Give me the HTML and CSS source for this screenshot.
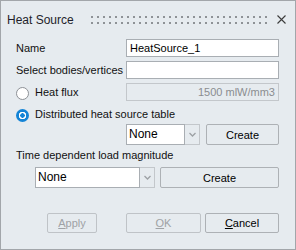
FILE: index.html
```html
<!doctype html>
<html>
	<head>
		<title>Heat Source</title>
		<link rel="stylesheet" href="styles.css">
	</head>
	<body>
		<div class="dialog">
			<div class="titlebar">
				<span class="title">Heat Source</span>
				<div class="grip">
					<div class="gripRow"></div>
					<div class="gripRow"></div>
				</div>
				<svg class="close" width="9" height="9" viewBox="0 0 9 9">
					<path d="M0.5 0.5 L8.5 8.5 M8.5 0.5 L0.5 8.5" stroke="#3c3c3c" stroke-width="1.1" fill="none"/>
				</svg>
			</div>
			<div class="form">
				<div class="field">
					<label>Name</label>
					<div class="input">HeatSource_1</div>
				</div>
				<div class="field">
					<label>Select bodies/vertices</label>
					<div class="input"></div>
				</div>
				<div class="field">
					<label class="option"><input type="radio" name="src"> Heat flux</label>
					<div class="input disabled">1500 mlW/mm3</div>
				</div>
				<div class="optionRow">
					<label class="option"><input type="radio" name="src" checked> Distributed heat source table</label>
				</div>
				<div class="tableRow">
					<div class="combo short">
						<div class="comboText">None</div>
						<div class="comboArrow">
							<svg width="7" height="5" viewBox="0 0 7 5"><path d="M0.5 1 L3.5 4 L6.5 1" stroke="#9da1a5" stroke-width="1.3" fill="none"/></svg>
						</div>
					</div>
					<button class="btn create">Create</button>
				</div>
				<div class="labelRow">Time dependent load magnitude</div>
				<div class="loadRow">
					<div class="combo long">
						<div class="comboText">None</div>
						<div class="comboArrow">
							<svg width="7" height="5" viewBox="0 0 7 5"><path d="M0.5 1 L3.5 4 L6.5 1" stroke="#9da1a5" stroke-width="1.3" fill="none"/></svg>
						</div>
					</div>
					<button class="btn createWide">Create</button>
				</div>
			</div>
			<div class="actions">
				<button class="btn off apply"><u>A</u>pply</button>
				<button class="btn off ok"><u>O</u>K</button>
				<button class="btn cancel"><u>C</u>ancel</button>
			</div>
		</div>
	</body>
</html>
```
FILE: styles.css
```css
* {
	margin: 0px;
	padding: 0px;
}
body {
	font-family: "Liberation Sans", Arial, sans-serif;
	font-size: 11px;
	color: #111;
}
.dialog {
	width: 296px;
	height: 250px;
	box-sizing: border-box;
	border: 1px solid #a2a6aa;
	background: #e6ebef;
	display: flex;
	flex-direction: column;
}
.titlebar {
	height: 38px;
	display: flex;
	align-items: center;
	padding-left: 6px;
}
.title {
	font-size: 12px;
	width: 84px;
	color: #1e1e2a;
}
.grip {
	width: 176px;
	display: flex;
	flex-direction: column;
	gap: 4px;
	margin-top: -1px;
}
.gripRow {
	height: 2px;
	background: repeating-linear-gradient(90deg, #8e9296 0 2px, transparent 2px 6px);
}
.close {
	margin-left: 10px;
	margin-top: -1px;
}
.form {
	padding: 0 16px 0 15px;
	display: flex;
	flex-direction: column;
}
.field {
	display: grid;
	grid-template-columns: 110px 153px;
	align-items: center;
	height: 18px;
	margin-bottom: 4px;
}
.input {
	height: 18px;
	box-sizing: border-box;
	border: 1px solid #a9aeb3;
	background: white;
	line-height: 16px;
	padding: 0 3px;
	color: #000;
}
.input.disabled {
	background: #e6ebef;
	border-color: #c3c7cb;
	color: #8a8d90;
	text-align: right;
}
.option {
	display: flex;
	align-items: center;
	white-space: nowrap;
}
.option input {
	appearance: none;
	width: 13px;
	height: 13px;
	box-sizing: border-box;
	border-radius: 50%;
	border: 1px solid #8d9196;
	background: white;
	margin: 3px 6px 0 0;
}
.option input:checked {
	border: none;
	background: radial-gradient(circle, #1484d6 0 2px, #fff 2.5px 3.5px, #1484d6 4px);
}
.optionRow {
	height: 18px;
	display: flex;
	align-items: center;
	margin-bottom: 1px;
}
.tableRow {
	display: flex;
	gap: 6px;
	height: 21px;
	margin-left: 110px;
}
.combo {
	display: flex;
	height: 21px;
}
.comboText {
	flex: 1;
	box-sizing: border-box;
	border: 1px solid #a9aeb3;
	background: white;
	line-height: 19px;
	padding-left: 2px;
	font-size: 12px;
	color: #000;
}
.comboArrow {
	width: 15px;
	box-sizing: border-box;
	border: 1px solid #c3c7cb;
	border-left: none;
	display: flex;
	align-items: center;
	justify-content: center;
}
.combo.short {
	width: 74px;
}
.combo.long {
	width: 120px;
}
.btn {
	font-family: "Liberation Sans", Arial, sans-serif;
	font-size: 11px;
	color: #000;
	background: #e6ebef;
	border: 1px solid #adb1b5;
	border-radius: 2px;
	height: 21px;
}
.create {
	width: 73px;
}
.labelRow {
	height: 18px;
	line-height: 18px;
	margin-top: 1px;
}
.loadRow {
	display: flex;
	gap: 5px;
	margin: 3px 0 0 19px;
}
.createWide {
	width: 119px;
}
.actions {
	display: flex;
	padding: 0 16px 0 46px;
	margin-top: 25px;
}
.actions .btn {
	height: 20px;
}
.btn.off {
	color: #9fa2a5;
	border-color: #bfc3c7;
}
.apply {
	width: 50px;
	margin-right: 29px;
}
.ok {
	width: 75px;
	margin-right: 4px;
}
.cancel {
	width: 74px;
}
```
